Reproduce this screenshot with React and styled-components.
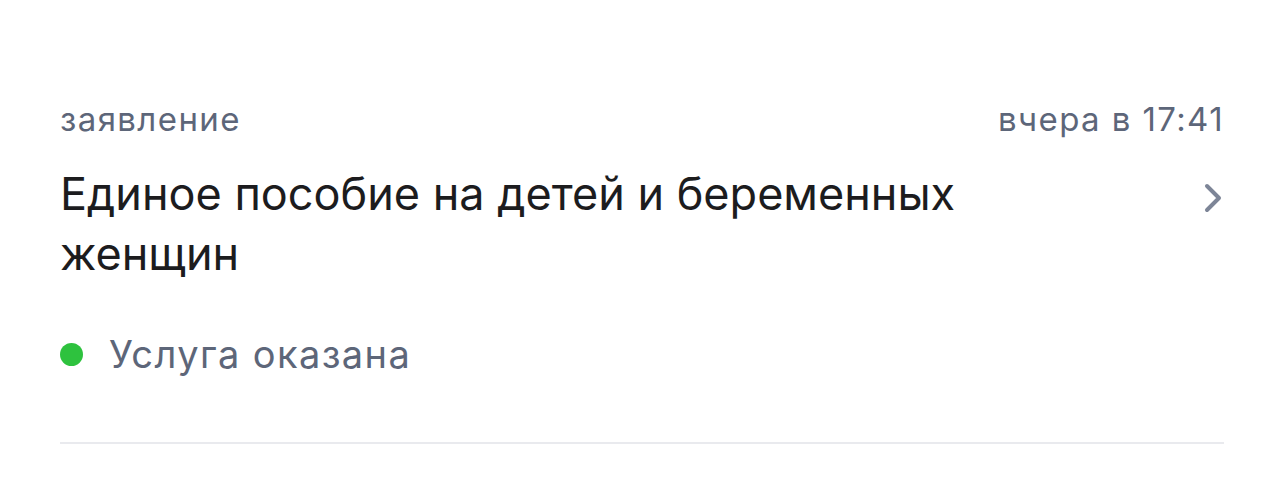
import React from "react";
import styled, { createGlobalStyle } from "styled-components";

const Global = createGlobalStyle`
  html, body { margin: 0; padding: 0; background: #ffffff; }
  body { font-family: Inter, "Noto Sans", sans-serif; -webkit-font-smoothing: antialiased; }
`;

const Card = styled.div`
  padding: 96px 60px 0 60px;
`;

const Header = styled.div`
  display: flex;
  justify-content: space-between;
  align-items: baseline;
  font-size: 33px;
  line-height: 46px;
  color: #5d6679;
  letter-spacing: 1.4px;
`;

const Body = styled.div`
  display: flex;
  justify-content: space-between;
  align-items: flex-start;
  margin-top: 22px;
`;

const Title = styled.div`
  font-size: 45px;
  line-height: 60px;
  color: #1c1c1e;
  max-width: 940px;
`;

const Chevron = styled.svg`
  width: 22px;
  height: 32px;
  margin-top: 18px;
  flex-shrink: 0;
`;

const Status = styled.div`
  display: flex;
  align-items: center;
  gap: 26px;
  margin-top: 44px;
  font-size: 38px;
  line-height: 52px;
  letter-spacing: 1.4px;
  color: #5d6679;
`;

const Dot = styled.span`
  width: 23px;
  height: 23px;
  border-radius: 50%;
  background: ${(p) => p.$color};
  flex-shrink: 0;
`;

const Divider = styled.hr`
  border: none;
  height: 2px;
  background: #e9eaee;
  margin: 62px 0 0 0;
`;

export default function App() {
  return (
    <>
      <Global />
      <Card>
        <Header>
          <span>заявление</span>
          <span>вчера в 17:41</span>
        </Header>
        <Body>
          <Title>Единое пособие на детей и беременных женщин</Title>
          <Chevron viewBox="0 0 22 32">
            <path d="M5 4 L17 16 L5 28" fill="none" stroke="#7d8597" strokeWidth="4" strokeLinecap="round" strokeLinejoin="round" />
          </Chevron>
        </Body>
        <Status>
          <Dot $color="#2ec23e" />
          <span>Услуга оказана</span>
        </Status>
        <Divider />
      </Card>
    </>
  );
}
